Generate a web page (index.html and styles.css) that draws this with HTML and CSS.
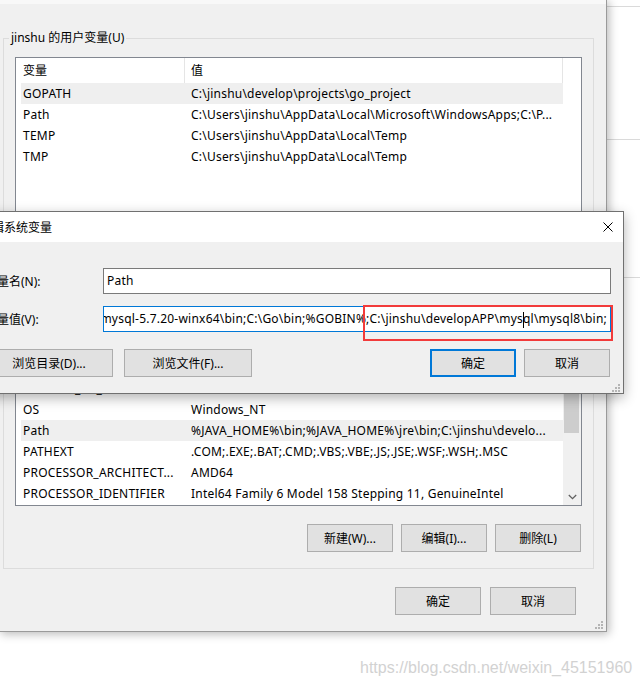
FILE: index.html
```html
<!DOCTYPE html>
<html lang="zh-CN">
<head>
<meta charset="utf-8">
<title>环境变量</title>
<link rel="stylesheet" href="styles.css">
</head>
<body>
<div class="desk">
  <div class="back"><div class="back-row"></div></div>

  <div class="win">
    <div class="strip"></div>

    <fieldset class="group g1">
      <legend>jinshu 的用户变量(U)</legend>
      <div class="gin">
        <div class="list u-list">
          <div class="lv">
            <div class="hdr"><span class="c1">变量</span><span class="c2">值</span></div>
            <div class="row sel"><span class="c1">GOPATH</span><span class="c2">C:\jinshu\develop\projects\go_project</span></div>
            <div class="row"><span class="c1">Path</span><span class="c2">C:\Users\jinshu\AppData\Local\Microsoft\WindowsApps;C:\P...</span></div>
            <div class="row"><span class="c1">TEMP</span><span class="c2">C:\Users\jinshu\AppData\Local\Temp</span></div>
            <div class="row"><span class="c1">TMP</span><span class="c2">C:\Users\jinshu\AppData\Local\Temp</span></div>
          </div>
          <div class="vs"></div>
        </div>
        <div class="btnrow">
          <button class="btn">新建(N)...</button>
          <button class="btn">编辑(E)...</button>
          <button class="btn">删除(D)</button>
        </div>
      </div>
    </fieldset>

    <fieldset class="group g2">
      <legend>系统变量(S)</legend>
      <div class="gin">
        <div class="list s-list">
          <div class="lv">
            <div class="hdr"><span class="c1">变量</span><span class="c2">值</span></div>
            <div class="row"><span class="c1">NUMBER_OF_PROCESSORS</span><span class="c2">8</span></div>
            <div class="row"><span class="c1">OS</span><span class="c2">Windows_NT</span></div>
            <div class="row sel"><span class="c1">Path</span><span class="c2">%JAVA_HOME%\bin;%JAVA_HOME%\jre\bin;C:\jinshu\develo...</span></div>
            <div class="row"><span class="c1">PATHEXT</span><span class="c2">.COM;.EXE;.BAT;.CMD;.VBS;.VBE;.JS;.JSE;.WSF;.WSH;.MSC</span></div>
            <div class="row"><span class="c1">PROCESSOR_ARCHITECT...</span><span class="c2">AMD64</span></div>
            <div class="row"><span class="c1">PROCESSOR_IDENTIFIER</span><span class="c2">Intel64 Family 6 Model 158 Stepping 11, GenuineIntel</span></div>
          </div>
          <div class="vs">
            <div class="thumb"></div>
            <div class="arrow-dn">
              <svg width="9" height="6" viewBox="0 0 9 6"><polyline points="0.8,1 4.5,4.6 8.2,1" fill="none" stroke="#606060" stroke-width="1.3"/></svg>
            </div>
          </div>
        </div>
        <div class="btnrow">
          <button class="btn">新建(W)...</button>
          <button class="btn">编辑(I)...</button>
          <button class="btn">删除(L)</button>
        </div>
      </div>
    </fieldset>

    <div class="foot">
      <button class="btn">确定</button>
      <button class="btn">取消</button>
    </div>

    <svg class="grip" width="8" height="8" viewBox="0 0 8 8"><g fill="#b4b4b4"><rect x="6" y="0" width="2" height="2"/><rect x="3" y="3" width="2" height="2"/><rect x="6" y="3" width="2" height="2"/><rect x="0" y="6" width="2" height="2"/><rect x="3" y="6" width="2" height="2"/><rect x="6" y="6" width="2" height="2"/></g></svg>
  </div>

  <div class="dlg">
    <div class="dlg-title">
      <span>编辑系统变量</span>
      <svg class="x" width="10" height="10" viewBox="0 0 10 10"><path d="M0.5 0.5 L9.5 9.5 M9.5 0.5 L0.5 9.5" stroke="#000" stroke-width="1" fill="none"/></svg>
    </div>
    <div class="dlg-body">
      <div class="field">
        <label>变量名(N):</label>
        <div class="inp">Path</div>
      </div>
      <div class="field">
        <label>变量值(V):</label>
        <div class="inp focus"><span class="val">%JAVA_HOME%\bin;%JAVA_HOME%\jre\bin;C:\jinshu\developAPP\mysql-5.7.20-winx64\bin;C:\Go\bin;%GOBIN%;C:\jinshu\developAPP\mys<i class="caret"></i>ql\mysql8\bin;</span></div>
      </div>
      <div class="dlg-btns">
        <button class="btn bbtn">浏览目录(D)...</button>
        <button class="btn bbtn">浏览文件(F)...</button>
        <button class="btn ok">确定</button>
        <button class="btn">取消</button>
      </div>
    </div>
    <svg class="grip dgrip" width="8" height="8" viewBox="0 0 8 8"><g fill="#b4b4b4"><rect x="6" y="0" width="2" height="2"/><rect x="3" y="3" width="2" height="2"/><rect x="6" y="3" width="2" height="2"/><rect x="0" y="6" width="2" height="2"/><rect x="3" y="6" width="2" height="2"/><rect x="6" y="6" width="2" height="2"/></g></svg>
  </div>

  <div class="mark"></div>
  <div class="wm">https://blog.csdn.net/weixin_45151960</div>
</div>
</body>
</html>
```
FILE: styles.css
```css
* { box-sizing: border-box; }

body {
  margin: 0;
  background: #fff;
  font-family: "Noto Sans", "Noto Sans CJK SC", sans-serif;
  font-size: 12px;
  color: #000;
}

.desk {
  position: relative;
  width: 640px;
  height: 687px;
  overflow: hidden;
}

/* window behind, peeking out on the right */
.back {
  position: absolute;
  left: 590px;
  top: 6px;
  width: 100px;
  height: 272px;
  background: #fff;
  border-top: 1px solid #dadada;
  border-bottom: 1px solid #dadada;
}
.back-row {
  height: 133px;
  border-bottom: 1px solid #dadada;
}

/* main environment-variables window */
.win {
  position: absolute;
  left: -1px;
  top: -1px;
  width: 608px;
  height: 633px;
  background: #f0f0f0;
  border: 1px solid #9a9a9a;
  box-shadow: 2px 2px 9px rgba(0, 0, 0, 0.28);
}

.strip {
  height: 4px;
  background: #f8f8f8;
}

.group {
  margin: 26px 12px 0 3px;
  padding: 0 5px 16px;
  border: 1px solid #dcdcdc;
  min-width: 0;
}
.group legend {
  padding: 0 2px;
  font-size: 12px;
  line-height: 16px;
}
.g2 { margin-top: 21px; }

.gin { padding: 11px 6px 0; }

.list {
  display: flex;
  background: #fff;
  border: 1px solid #828790;
  overflow: hidden;
}
.u-list { height: 184px; }
.s-list { height: 154px; }

.lv {
  flex: 1;
  min-width: 0;
  padding-left: 5px;
}
.vs {
  flex: none;
  width: 18px;
}
.s-list .vs {
  display: flex;
  flex-direction: column;
  background: #f0f0f0;
}
.thumb {
  margin: 18px 0 0 1px;
  width: 15px;
  height: 62px;
  background: #cdcdcd;
}
.arrow-dn {
  margin-top: auto;
  height: 17px;
  display: flex;
  align-items: center;
  justify-content: center;
}

.hdr, .row {
  display: grid;
  grid-template-columns: 164px 1fr;
  white-space: nowrap;
}
.hdr {
  height: 25px;
  line-height: 25px;
}
.hdr .c1, .hdr .c2 { border-right: 1px solid #e5e5e5; }
.row {
  height: 21px;
  line-height: 21px;
  letter-spacing: 0.22px;
}
.row span { overflow: hidden; }
.row.sel { background: #efefef; }
.c1 { padding-left: 2px; }
.c2 { padding-left: 6px; }

.btn {
  width: 86px;
  height: 28px;
  margin: 0;
  padding: 0;
  border: 1px solid #adadad;
  background: #e1e1e1;
  color: #000;
  font: inherit;
  font-size: 12px;
  display: flex;
  align-items: center;
  justify-content: center;
}

.btnrow {
  display: flex;
  justify-content: flex-end;
  gap: 8px;
  margin-top: 18px;
  padding-right: 1px;
}

.foot {
  display: flex;
  justify-content: flex-end;
  gap: 9px;
  margin-top: 18px;
  padding-right: 30px;
}

.grip {
  position: absolute;
  right: 3px;
  bottom: 2px;
}
.dgrip {
  right: 3px;
  bottom: 1px;
}

/* edit dialog */
.dlg {
  position: absolute;
  left: -28px;
  top: 211px;
  width: 652px;
  background: #f0f0f0;
  border: 1px solid #707070;
  box-shadow: 0 4px 12px rgba(0, 0, 0, 0.3);
}
.dlg-title {
  height: 30px;
  background: #fff;
  display: flex;
  align-items: center;
  padding: 0 10px 1px 7px;
}
.dlg-title .x { margin-left: auto; }

.dlg-body { padding: 26px 12px 16px; }

.field {
  display: grid;
  grid-template-columns: 118px 508px;
  align-items: center;
}
.field + .field { margin-top: 12px; }

.inp {
  height: 26px;
  padding: 0 3px;
  background: #fff;
  border: 1px solid #7a7a7a;
  line-height: 24px;
  letter-spacing: 0.22px;
  white-space: nowrap;
  overflow: hidden;
}
.inp.focus {
  border-color: #0078d7;
  display: flex;
  justify-content: flex-end;
}
.val { flex: none; }
.caret {
  display: inline-block;
  width: 1px;
  height: 16px;
  margin-right: -1px;
  background: #000;
  vertical-align: middle;
}

.dlg-btns {
  display: flex;
  gap: 8px;
  margin-top: 17px;
  padding-right: 1px;
}
.bbtn { width: 128px; }
.bbtn + .bbtn { margin-left: 3px; }
.dlg-btns .ok {
  margin-left: auto;
  border: 2px solid #0078d7;
}

/* annotation + watermark */
.mark {
  position: absolute;
  left: 363px;
  top: 305px;
  width: 250px;
  height: 36px;
  border: 2px solid #f23b3b;
}
.wm {
  position: absolute;
  left: 360px;
  top: 659px;
  font-family: "Liberation Sans", Arial, sans-serif;
  font-size: 16px;
  color: #d2d2d2;
  white-space: nowrap;
}
```
